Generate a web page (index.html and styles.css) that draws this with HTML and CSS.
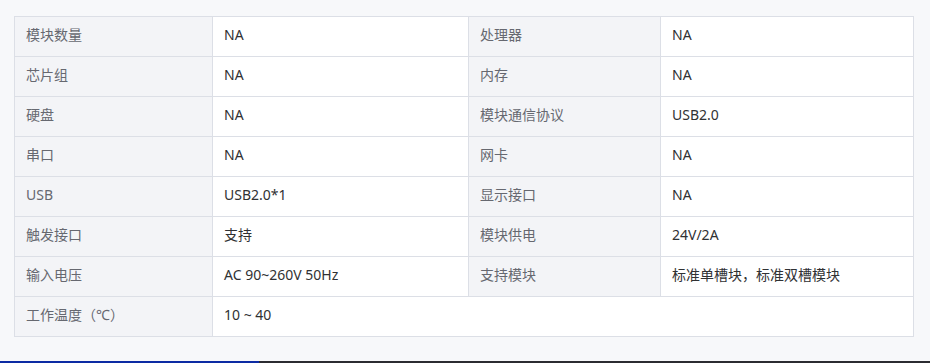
FILE: index.html
```html
<!DOCTYPE html>
<html lang="zh-CN">
<head>
<meta charset="utf-8">
<title>参数</title>
<link rel="stylesheet" href="styles.css">
</head>
<body>
<div class="page">
  <div class="spec">
    <div class="cell label">模块数量</div><div class="cell value">NA</div>
    <div class="cell label">处理器</div><div class="cell value">NA</div>
    <div class="cell label">芯片组</div><div class="cell value">NA</div>
    <div class="cell label">内存</div><div class="cell value">NA</div>
    <div class="cell label">硬盘</div><div class="cell value">NA</div>
    <div class="cell label">模块通信协议</div><div class="cell value">USB2.0</div>
    <div class="cell label">串口</div><div class="cell value">NA</div>
    <div class="cell label">网卡</div><div class="cell value">NA</div>
    <div class="cell label">USB</div><div class="cell value">USB2.0*1</div>
    <div class="cell label">显示接口</div><div class="cell value">NA</div>
    <div class="cell label">触发接口</div><div class="cell value">支持</div>
    <div class="cell label">模块供电</div><div class="cell value">24V/2A</div>
    <div class="cell label">输入电压</div><div class="cell value">AC 90~260V 50Hz</div>
    <div class="cell label">支持模块</div><div class="cell value">标准单槽块，标准双槽模块</div>
    <div class="cell label">工作温度（℃）</div><div class="cell value span3">10 ~ 40</div>
  </div>
</div>
<div class="bar"><div class="bar-blue"></div><div class="bar-dark"></div></div>
</body>
</html>
```
FILE: styles.css
```css
html, body {
  margin: 0;
  padding: 0;
  background: #f7f8fa;
}
body {
  width: 930px;
  height: 363px;
  overflow: hidden;
  font-family: "Noto Sans", "Noto Sans CJK SC", sans-serif;
  font-size: 14px;
}
.page {
  padding: 16px 14px 24px 14px;
}
.spec {
  display: grid;
  grid-template-columns: 198px 256px 192px 253px;
  grid-auto-rows: 40px;
  width: 900px;
  box-sizing: border-box;
  border-left: 1px solid #dcdfe6;
  border-top: 1px solid #dcdfe6;
}
.cell {
  box-sizing: border-box;
  border-right: 1px solid #dcdfe6;
  border-bottom: 1px solid #dcdfe6;
  padding: 0 11px 4px 11px;
  display: flex;
  align-items: center;
  line-height: 20px;
}
.label {
  background: #f3f4f7;
  color: #666870;
}
.value {
  background: #ffffff;
  color: #303133;
}
.span3 {
  grid-column: span 3;
}
.bar {
  display: flex;
  height: 2px;
}
.bar-blue {
  width: 259px;
  background: #0c2ba3;
}
.bar-dark {
  flex: 1;
  background: #2b2c31;
}
```
